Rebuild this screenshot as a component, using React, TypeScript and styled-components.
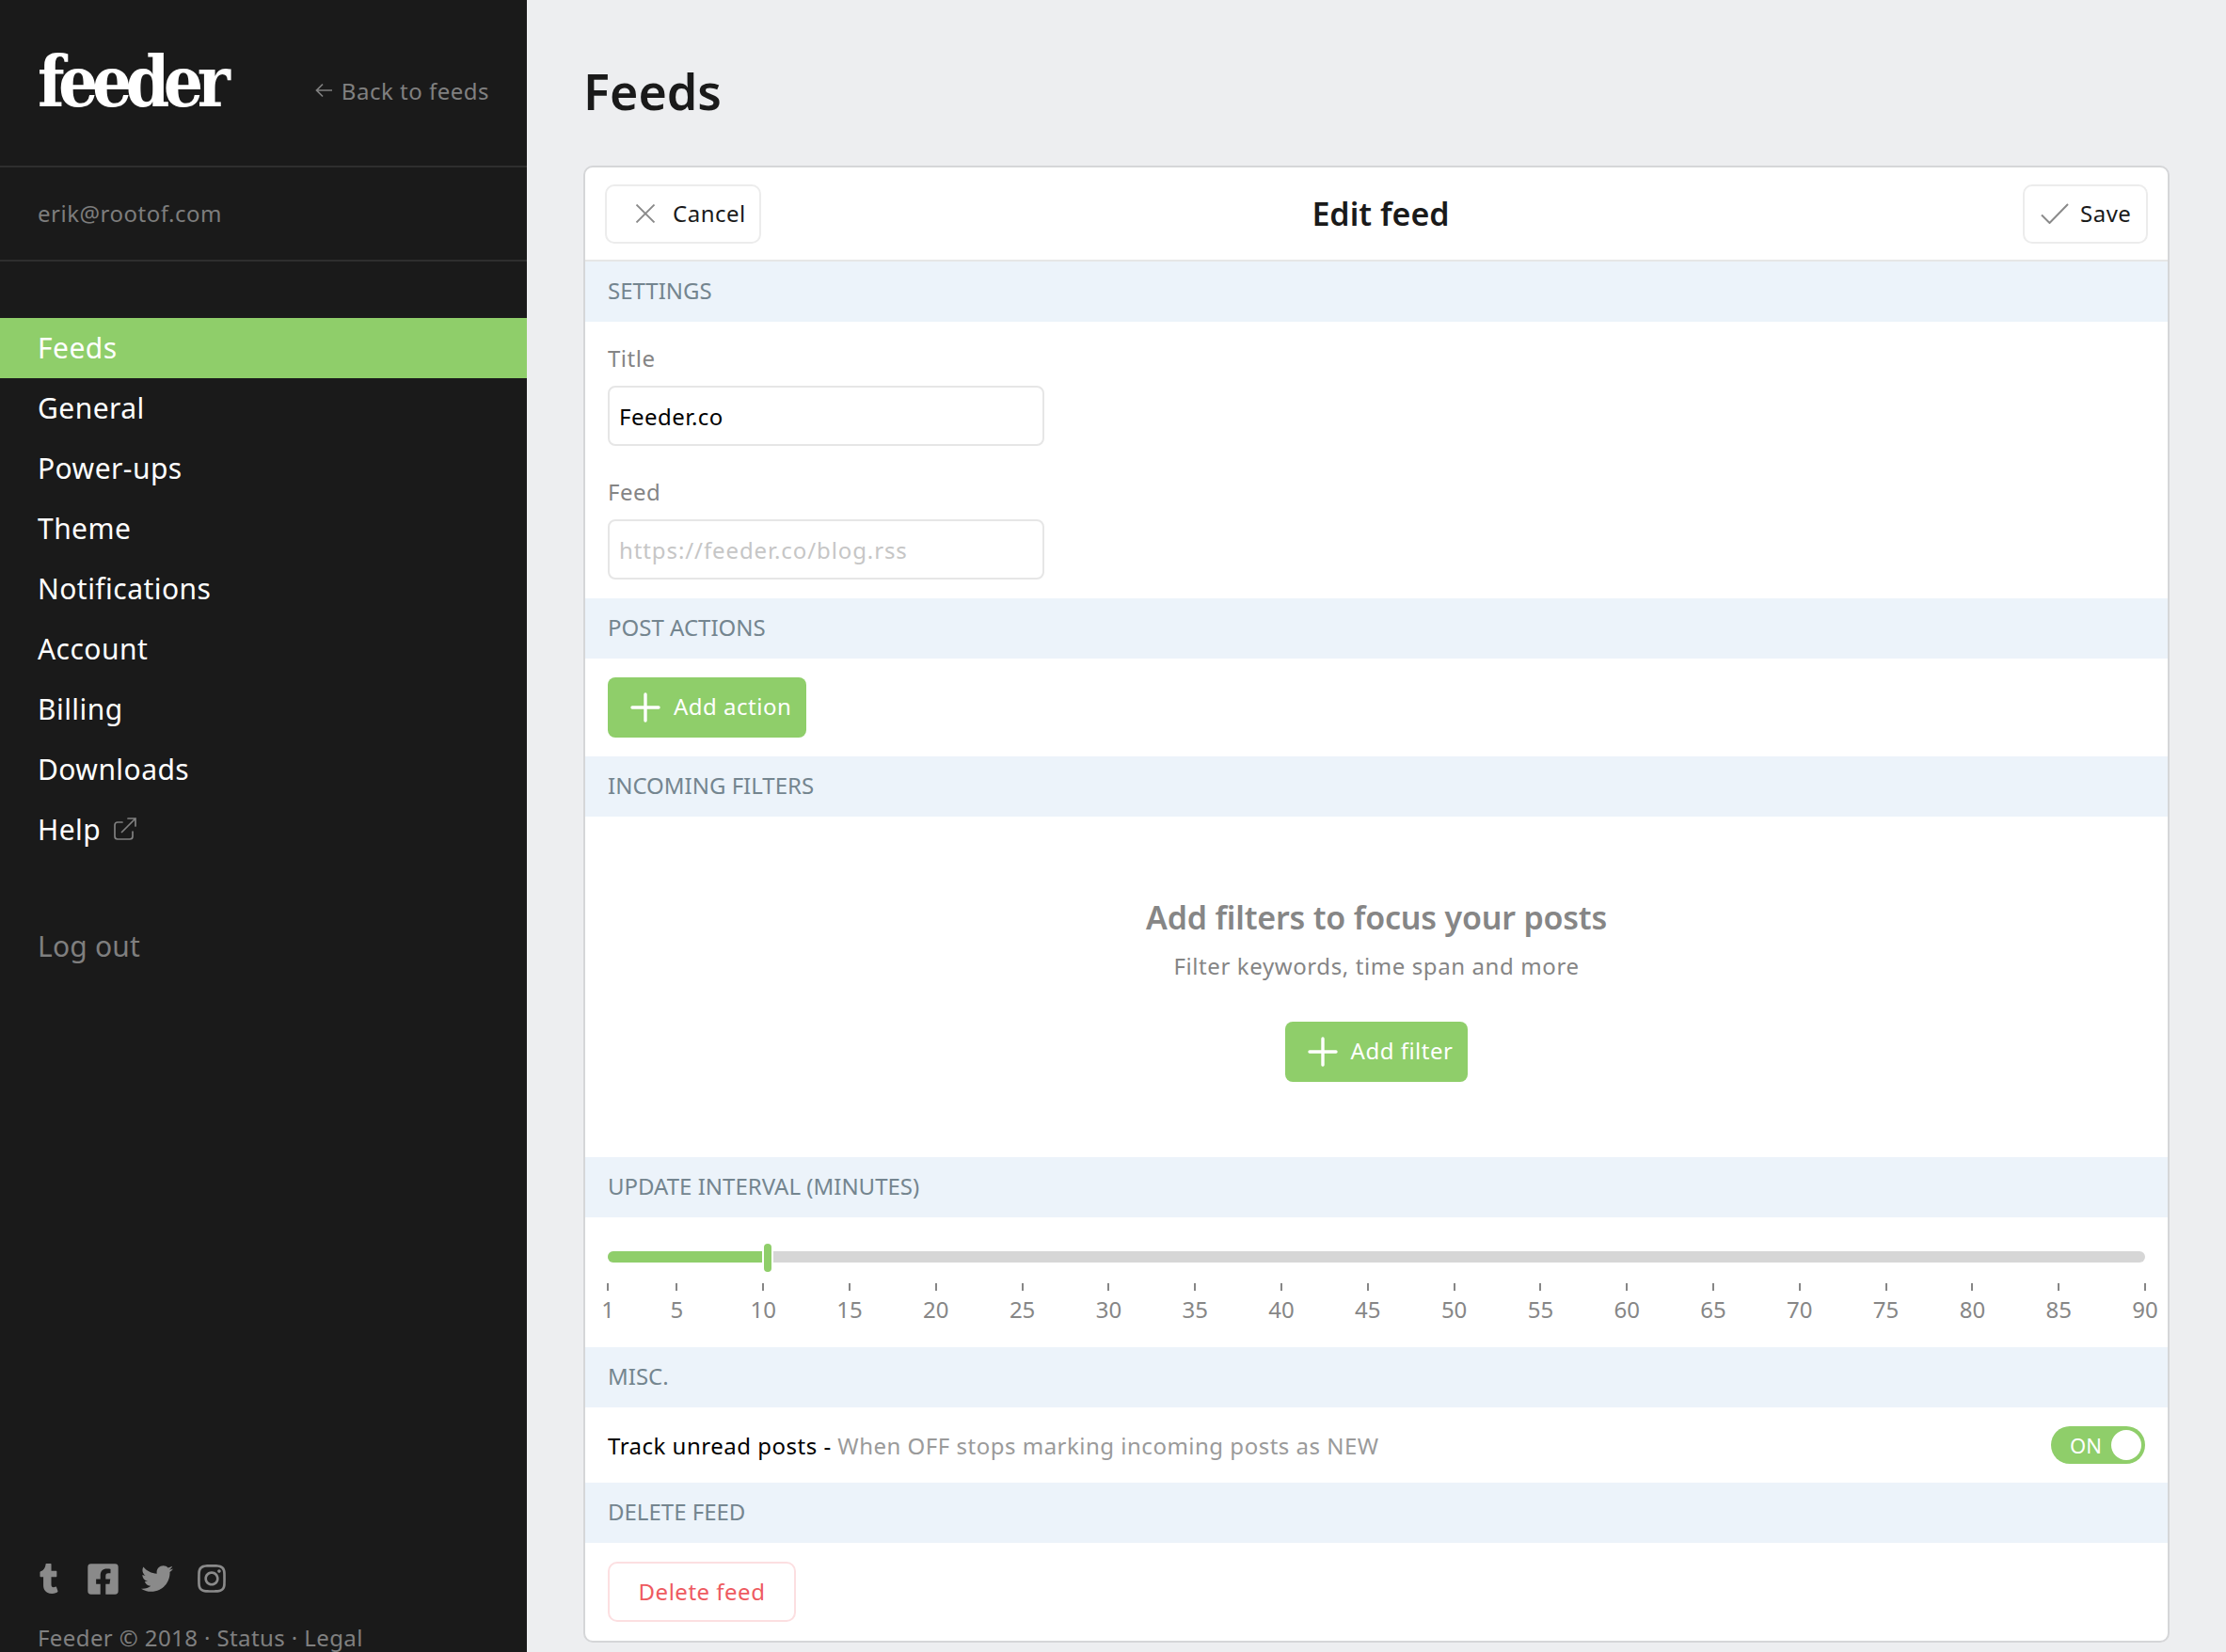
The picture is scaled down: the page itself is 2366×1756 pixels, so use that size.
import React from "react";
import styled, { createGlobalStyle } from "styled-components";
import { FaTumblr, FaFacebookSquare, FaTwitter, FaInstagram } from "react-icons/fa";

const FONT = `"Noto Sans", "Open Sans", sans-serif`;

const Global = createGlobalStyle`
  html, body { margin: 0; padding: 0; height: 100%; background: #edeef0; }
  * { box-sizing: border-box; }
  body { font-family: ${FONT}; color: #1a1a1a; letter-spacing: 0.5px; }
`;

const Page = styled.div`
  display: grid;
  grid-template-columns: 560px 1fr;
  width: 2366px;
  height: 1756px;
  overflow: hidden;
`;

const Sidebar = styled.aside`
  background: #1a1a1a;
  display: flex;
  flex-direction: column;
  height: 1756px;
  overflow: hidden;
`;

const SideHeader = styled.div`
  height: 178px;
  border-bottom: 2px solid #2e2e2e;
  padding: 0 40px;
  display: flex;
  justify-content: space-between;
`;

const Logo = styled.div`
  font-family: "DejaVu Serif", "Liberation Serif", serif;
  font-stretch: condensed;
  font-weight: 700;
  font-size: 74px;
  letter-spacing: -6.5px;
  line-height: 80px;
  color: #fff;
  margin-top: 47px;
`;

const BackLink = styled.div`
  display: flex;
  align-items: center;
  gap: 10px;
  height: 36px;
  margin-top: 78px;
  font-size: 24px;
  color: #808080;
`;

const UserRow = styled.div`
  height: 100px;
  padding: 0 40px 2px;
  border-bottom: 2px solid #2e2e2e;
  display: flex;
  align-items: center;
  font-size: 24px;
  color: #7d7d7d;
`;

const Nav = styled.nav`
  margin-top: 60px;
  display: flex;
  flex-direction: column;
`;

const NavItem = styled.div<{ $active?: boolean }>`
  height: 64px;
  padding: 0 40px 2px;
  display: flex;
  align-items: center;
  gap: 14px;
  font-size: 30px;
  letter-spacing: 0.45px;
  color: #fff;
  background: ${(p) => (p.$active ? "#8fce6a" : "transparent")};
`;

const LogOut = styled(NavItem)`
  margin-top: 60px;
  letter-spacing: 0.2px;
  color: #7f7f7f;
`;

const SideFoot = styled.div`
  margin-top: auto;
  padding: 0 40px;
  color: #8a8a8a;
`;

const Socials = styled.div`
  display: flex;
  align-items: center;
  height: 32px;
  margin-left: -4px;
`;

const SocialSlot = styled.span<{ $gap: number }>`
  display: flex;
  margin-right: ${(p) => p.$gap}px;
`;

const Copy = styled.div`
  margin-top: 32px;
  height: 30px;
  line-height: 30px;
  font-size: 24px;
  letter-spacing: 0.4px;
  color: #808080;
  white-space: nowrap;
`;

const Main = styled.main`
  padding: 0 60px;
`;

const PageTitle = styled.h1`
  margin: 0;
  height: 176px;
  padding-top: 58px;
  font-size: 52px;
  line-height: 78px;
  font-weight: 600;
  color: #1a1a1a;
  letter-spacing: 0;
`;

const Card = styled.section`
  width: 1686px;
  background: #fff;
  border: 2px solid #d5d6d8;
  border-radius: 10px;
`;

const CardHead = styled.header`
  height: 100px;
  padding: 18px 21px 0;
  border-bottom: 2px solid #e6e6e6;
  display: flex;
  align-items: flex-start;
`;

const CardTitle = styled.h2`
  flex: 1;
  margin: 0;
  height: 64px;
  padding-right: 24px;
  text-align: center;
  font-size: 34px;
  line-height: 62px;
  font-weight: 600;
  color: #1a1a1a;
  letter-spacing: 0;
`;

const GhostButton = styled.button`
  height: 63px;
  display: flex;
  align-items: center;
  background: #fff;
  border: 2px solid #ececec;
  border-radius: 10px;
  font-family: ${FONT};
  font-size: 24px;
  letter-spacing: 0.5px;
  color: #1a1a1a;
`;

const CancelButton = styled(GhostButton)`
  width: 166px;
  padding: 0 0 2px 30px;
  gap: 18px;
`;

const SaveButton = styled(GhostButton)`
  width: 133px;
  padding: 0 0 2px 17px;
  gap: 12px;
`;

const Band = styled.div`
  height: 64px;
  padding: 0 24px 4px;
  display: flex;
  align-items: center;
  background: #ecf3fa;
  color: #74858f;
  font-size: 24px;
  letter-spacing: 0;
  text-transform: uppercase;
`;

const Fields = styled.div`
  padding: 20px 24px;
  display: flex;
  flex-direction: column;
  gap: 30px;
`;

const Field = styled.label`
  display: flex;
  flex-direction: column;
  gap: 12px;
`;

const FieldLabel = styled.span`
  height: 36px;
  line-height: 38px;
  font-size: 24px;
  color: #858585;
`;

const TextInput = styled.input`
  width: 464px;
  height: 64px;
  padding: 0 10px;
  border: 2px solid #e6e6e6;
  border-radius: 8px;
  font-family: ${FONT};
  font-size: 24px;
  letter-spacing: 0.5px;
  color: #000;
  outline: none;
  &::placeholder { color: #c6c6c6; opacity: 1; letter-spacing: 0.9px; }
`;

const ActionBlock = styled.div`
  padding: 20px 24px;
`;

const GreenButton = styled.button`
  height: 64px;
  padding: 0 16px 3px 24px;
  display: inline-flex;
  align-items: center;
  gap: 14px;
  vertical-align: top;
  border: none;
  border-radius: 8px;
  background: #8fce6a;
  color: #fff;
  font-family: ${FONT};
  font-size: 24px;
  letter-spacing: 0.5px;
`;

const PlusMark = styled.svg`
  margin-top: 3px;
`;

const Empty = styled.div`
  height: 362px;
  padding-top: 83px;
  display: flex;
  flex-direction: column;
  align-items: center;
`;

const EmptyTitle = styled.div`
  height: 48px;
  line-height: 48px;
  font-size: 34px;
  font-weight: 600;
  letter-spacing: -0.2px;
  color: #868686;
`;

const EmptySub = styled.div`
  margin-top: 10px;
  height: 36px;
  line-height: 36px;
  font-size: 24px;
  letter-spacing: 0.6px;
  color: #858585;
`;

const EmptyAction = styled.div`
  margin-top: 41px;
`;

const SliderBlock = styled.div`
  height: 138px;
  padding: 36px 24px 0;
`;

const Track = styled.div`
  position: relative;
  height: 12px;
  background: #d6d6d6;
  border-radius: 6px;
`;

const TrackFill = styled.div`
  position: absolute;
  left: 0;
  top: 0;
  bottom: 0;
  background: #8fce6a;
  border-radius: 6px 0 0 6px;
`;

const Thumb = styled.div`
  position: absolute;
  top: -8px;
  width: 8px;
  height: 30px;
  margin-left: 1px;
  background: #8fce6a;
  border-radius: 4px;
  box-shadow: 0 0 0 2px #fff;
`;

const Marks = styled.div`
  position: relative;
  height: 60px;
  margin-top: 22px;
`;

const Mark = styled.div`
  position: absolute;
  top: 0;
  width: 60px;
  margin-left: -30px;
  display: flex;
  flex-direction: column;
  align-items: center;
  color: #868686;
  font-size: 24px;
  letter-spacing: 0;
`;

const Tick = styled.span`
  width: 2px;
  height: 8px;
  background: #868686;
`;

const MarkLabel = styled.span`
  margin-top: 2px;
  line-height: 35px;
`;

const MiscRow = styled.div`
  height: 80px;
  padding: 0 24px;
  display: flex;
  align-items: center;
  justify-content: space-between;
  font-size: 24px;
  color: #000;
`;

const Muted = styled.span`
  color: #9a9a9a;
`;

const Toggle = styled.div`
  width: 100px;
  height: 40px;
  padding: 4px;
  border-radius: 20px;
  background: #8fce6a;
  display: flex;
  align-items: center;
  justify-content: space-between;
  color: #fff;
  font-size: 22px;
  letter-spacing: 0;
`;

const ToggleText = styled.span`
  margin-left: 16px;
`;

const Knob = styled.span`
  width: 32px;
  height: 32px;
  border-radius: 50%;
  background: #fff;
`;

const DeleteButton = styled.button`
  width: 200px;
  height: 64px;
  padding: 0 0 2px;
  background: #fff;
  border: 2px solid #fcdfe1;
  border-radius: 10px;
  color: #ee5a60;
  font-family: ${FONT};
  font-size: 24px;
  letter-spacing: 0.5px;
  vertical-align: top;
`;

const Plus = () => (
  <PlusMark width="32" height="32" viewBox="0 0 32 32" fill="none" stroke="#fff" strokeWidth="3.4" strokeLinecap="round">
    <path d="M16 2v28M2 16h28" />
  </PlusMark>
);

const ArrowLeft = () => (
  <svg width="18" height="16" viewBox="0 0 18 16" fill="none" stroke="#808080" strokeWidth="1.7">
    <path d="M18 8H2M8 1.5 1.5 8 8 14.5" />
  </svg>
);

const CloseIcon = () => (
  <svg width="22" height="20" viewBox="0 0 22 20" fill="none" stroke="#8a8a8a" strokeWidth="1.8">
    <path d="M1.5 0.5 20.5 19.5M20.5 0.5 1.5 19.5" />
  </svg>
);

const CheckIcon = () => (
  <svg width="30" height="22" viewBox="0 0 30 22" fill="none" stroke="#8a8a8a" strokeWidth="2">
    <path d="M1 12.5 9.5 21 29 1" />
  </svg>
);

const External = () => (
  <svg width="24" height="24" viewBox="0 0 24 24" fill="none" stroke="#808080" strokeWidth="1.7" strokeLinecap="round">
    <path d="M9 5H4a3 3 0 0 0-3 3v12a3 3 0 0 0 3 3h13a3 3 0 0 0 3-3v-5" />
    <path d="M8.5 15.5 23 1M15 1h8v8" />
  </svg>
);

const NAV = ["General", "Power-ups", "Theme", "Notifications", "Account", "Billing", "Downloads"];
const MARKS = [1, 5, 10, 15, 20, 25, 30, 35, 40, 45, 50, 55, 60, 65, 70, 75, 80, 85, 90];
const pos = (v: number) => ((v - 1) / 89) * 100;

export default function App() {
  return (
    <Page>
      <Global />
      <Sidebar>
        <SideHeader>
          <Logo>feeder</Logo>
          <BackLink>
            <ArrowLeft />
            Back to feeds
          </BackLink>
        </SideHeader>
        <UserRow>erik@rootof.com</UserRow>
        <Nav>
          <NavItem $active>Feeds</NavItem>
          {NAV.map((n) => (
            <NavItem key={n}>{n}</NavItem>
          ))}
          <NavItem>
            Help <External />
          </NavItem>
          <LogOut>Log out</LogOut>
        </Nav>
        <SideFoot>
          <Socials>
            <SocialSlot $gap={23}><FaTumblr size={32} /></SocialSlot>
            <SocialSlot $gap={22}><FaFacebookSquare size={37} /></SocialSlot>
            <SocialSlot $gap={24}><FaTwitter size={34} /></SocialSlot>
            <SocialSlot $gap={0}><FaInstagram size={34} /></SocialSlot>
          </Socials>
          <Copy>Feeder © 2018 · Status · Legal</Copy>
        </SideFoot>
      </Sidebar>
      <Main>
        <PageTitle>Feeds</PageTitle>
        <Card>
          <CardHead>
            <CancelButton>
              <CloseIcon />
              Cancel
            </CancelButton>
            <CardTitle>Edit feed</CardTitle>
            <SaveButton>
              <CheckIcon />
              Save
            </SaveButton>
          </CardHead>
          <Band>Settings</Band>
          <Fields>
            <Field>
              <FieldLabel>Title</FieldLabel>
              <TextInput defaultValue="Feeder.co" />
            </Field>
            <Field>
              <FieldLabel>Feed</FieldLabel>
              <TextInput placeholder="https://feeder.co/blog.rss" />
            </Field>
          </Fields>
          <Band>Post actions</Band>
          <ActionBlock>
            <GreenButton>
              <Plus />
              Add action
            </GreenButton>
          </ActionBlock>
          <Band>Incoming filters</Band>
          <Empty>
            <EmptyTitle>Add filters to focus your posts</EmptyTitle>
            <EmptySub>Filter keywords, time span and more</EmptySub>
            <EmptyAction>
              <GreenButton>
                <Plus />
                Add filter
              </GreenButton>
            </EmptyAction>
          </Empty>
          <Band>Update interval (minutes)</Band>
          <SliderBlock>
            <Track>
              <TrackFill style={{ width: `calc(${pos(10)}% - 1px)` }} />
              <Thumb style={{ left: `${pos(10)}%` }} />
            </Track>
            <Marks>
              {MARKS.map((m) => (
                <Mark key={m} style={{ left: `${pos(m)}%` }}>
                  <Tick />
                  <MarkLabel>{m}</MarkLabel>
                </Mark>
              ))}
            </Marks>
          </SliderBlock>
          <Band>Misc.</Band>
          <MiscRow>
            <span>
              Track unread posts - <Muted>When OFF stops marking incoming posts as NEW</Muted>
            </span>
            <Toggle>
              <ToggleText>ON</ToggleText>
              <Knob />
            </Toggle>
          </MiscRow>
          <Band>Delete feed</Band>
          <ActionBlock>
            <DeleteButton>Delete feed</DeleteButton>
          </ActionBlock>
        </Card>
      </Main>
    </Page>
  );
}
